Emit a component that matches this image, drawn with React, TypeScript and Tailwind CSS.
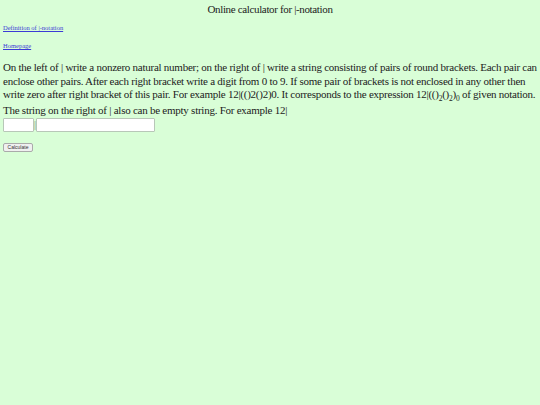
import React, { useState } from 'react';

const serif = { fontFamily: '"Liberation Serif", "Times New Roman", serif' };

// small lowered digit used inside the notation example
const Sub = ({ children }: { children: React.ReactNode }) => (
  <span className="inline-block align-[-3px] text-[7.5px] leading-[7px]">{children}</span>
);

const App = () => {
  const [left, setLeft] = useState('');
  const [right, setRight] = useState('');

  return (
    <div className="min-h-screen bg-[#d9fed7] px-[3px] text-black" style={serif}>
      <div className="pt-[3px] text-center text-[11px] leading-[13px] tracking-[-0.35px] text-[#222]">
        Online calculator for |-notation
      </div>

      <div className="mt-[8px] text-[6.5px] leading-[8px]">
        <a href="#" className="text-[#3b3bd6] underline">Definition of |-notation</a>
      </div>
      <div className="mt-[10px] text-[6.5px] leading-[8px]">
        <a href="#" className="text-[#3b3bd6] underline">Homepage</a>
      </div>

      <p className="mt-[11px] text-[11px] leading-[13.5px] tracking-[-0.25px] text-[#222]">
        On the left of | write a nonzero natural number; on the right of | write a string consisting of pairs of round
        brackets. Each pair can enclose other pairs. After each right bracket write a digit from 0 to 9. If some pair of
        brackets is not enclosed in any other then write zero after right bracket of this pair. For example 12|(()2()2)0.
        It corresponds to the expression 12|(()<Sub>2</Sub>()<Sub>2</Sub>)<Sub>0</Sub> of given notation.
        <span className="mt-[1.5px] block">The string on the right of | also can be empty string. For example 12|</span>
      </p>

      <div className="mt-[1px] flex items-center">
        <input
          value={left}
          onChange={e => setLeft(e.target.value)}
          className="h-[14px] w-[31px] rounded-[1px] border border-[#b8c7b8] bg-white text-[8px]"
        />
        <span className="text-[10px] leading-[14px] text-[#777]">|</span>
        <input
          value={right}
          onChange={e => setRight(e.target.value)}
          className="h-[14px] w-[119px] rounded-[1px] border border-[#b8c7b8] bg-white text-[8px]"
        />
      </div>

      <div className="mt-[11px] flex">
        <button
          className="flex h-[9px] w-[30px] items-center justify-center rounded-[2px] border border-[#aaa] bg-[#f0f0f0] text-[5px] text-[#333]"
          style={{ fontFamily: '"Liberation Sans", Arial, sans-serif' }}
        >
          Calculate
        </button>
      </div>
    </div>
  );
};

export default App;
